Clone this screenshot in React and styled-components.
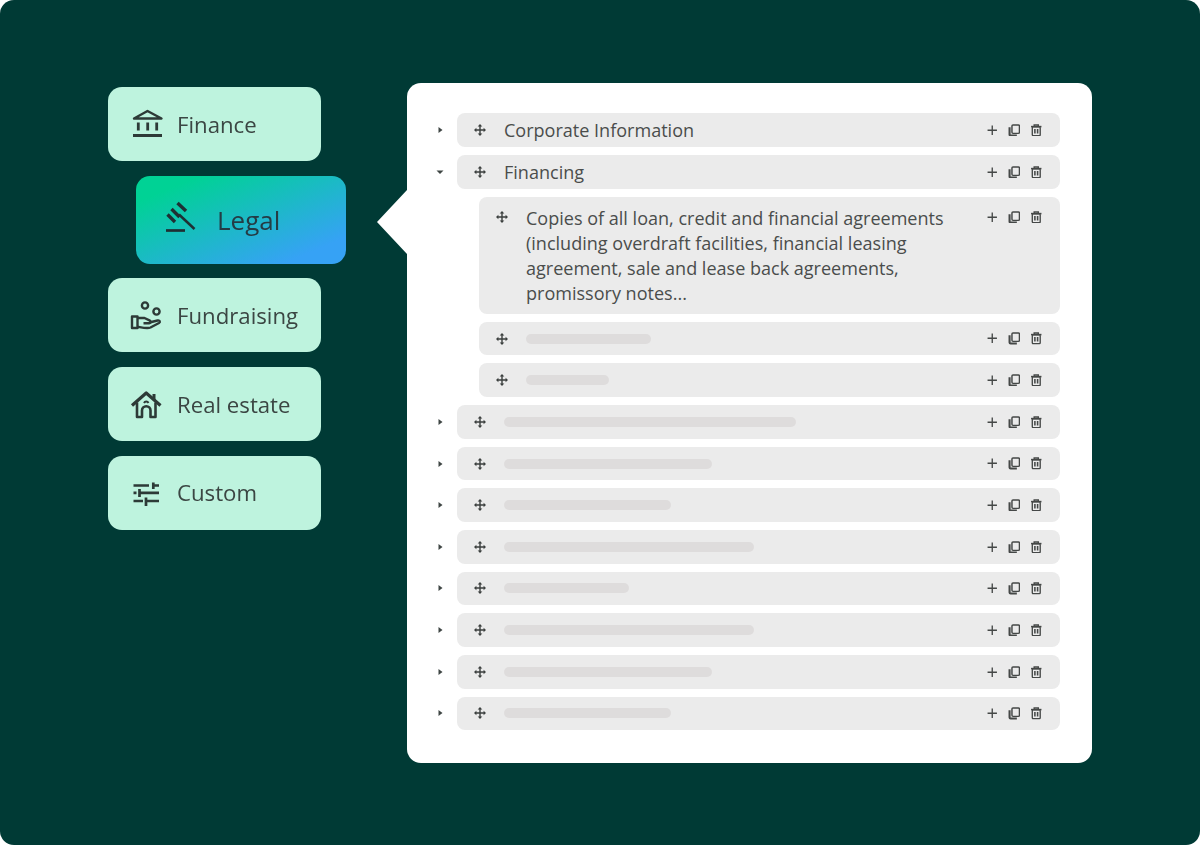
import React from "react";
import styled, { createGlobalStyle } from "styled-components";

const Global = createGlobalStyle`
  html, body { margin: 0; padding: 0; background: #fff; }
  body { font-family: "Open Sans", "Noto Sans", sans-serif; }
`;
const Stage = styled.div`
  width: 1200px; height: 845px; box-sizing: border-box; overflow: hidden;
  background: #003a35; border-radius: 14px;
  display: flex; align-items: flex-start; padding: 83px 0 0 108px;
`;
const Menu = styled.div`
  width: 299px; flex: none; padding-top: 4px;
  display: flex; flex-direction: column; gap: 14.7px;
  filter: blur(0.35px);
`;
const Card = styled.div`
  width: 213px; height: 74px; box-sizing: border-box; border-radius: 14px;
  background: #bef3de; color: #3b4643;
  display: flex; align-items: center; padding-left: 18px; gap: 7px;
  font-size: 22.2px;
  svg { width: 44px; height: 44px; flex: none; color: #2d3a37; }
`;
const ActiveCard = styled.div`
  width: 210px; height: 88px; box-sizing: border-box; margin-left: 28px; border-radius: 14px;
  background: linear-gradient(to bottom right, #00d295 15%, #36a2f5 85%);
  color: #243c45;
  display: flex; align-items: center; padding-left: 22px; gap: 15px;
  font-size: 26px;
  svg { width: 44px; height: 44px; flex: none; color: #1f2f33; }
`;
const Panel = styled.div`
  position: relative; width: 685px; height: 680px; flex: none; box-sizing: border-box;
  background: #fff; border-radius: 14px; padding: 30.4px 32px 0 30px;
  display: flex; flex-direction: column; gap: 8px;
  filter: blur(0.35px);
  &::before {
    content: ""; position: absolute; left: -30px; top: 107px;
    border-style: solid; border-width: 32px 30px 32px 0;
    border-color: transparent #fff transparent transparent;
  }
`;
const Line = styled.div`
  display: flex; align-items: flex-start; flex: none;
`;
const Caret = styled.div`
  width: 20px; height: 33.67px; flex: none; display: flex; align-items: center; justify-content: flex-start;
  svg { width: 8px; height: 8px; color: #3f4644; margin-left: -1px; }
`;
const Row = styled.div`
  flex: 1; min-height: 33.67px; box-sizing: border-box; border-radius: 8px; background: #ebebeb;
  margin-left: ${p => (p.$nested ? "42px" : "0")};
  display: flex; align-items: ${p => (p.$tall ? "flex-start" : "center")};
  padding: ${p => (p.$tall ? "8.5px 18px 7.5px 16px" : "0 18px 0 16px")};
`;
const Handle = styled.div`
  width: 14px; height: ${p => (p.$tall ? "25px" : "14px")}; flex: none; margin-right: 17px;
  display: flex; align-items: center; margin-top: ${p => (p.$tall ? "-1px" : "0")};
  color: #3b3f3e;
  svg { width: 14px; height: 14px; }
`;
const Label = styled.div`
  flex: 1; font-size: 18.05px; color: #4a4d4c; line-height: 25px; min-width: 0; padding-top: 1px;
`;
const LongLabel = styled(Label)`
  max-width: 440px; flex: none; margin-right: auto;
`;
const Skeleton = styled.div`
  height: 10px; border-radius: 5px; background: #dedcdc; width: ${p => p.$w}px; margin-right: auto;
`;
const Actions = styled.div`
  flex: none; display: flex; align-items: center; gap: 9.5px; color: #454847;
  margin-top: ${p => (p.$tall ? "5.5px" : "0")};
  svg { width: 12.5px; height: 12.5px; display: block; }
`;

const Bank = () => (
  <svg viewBox="0 -3 44 44" fill="none" stroke="currentColor">
    <path d="M8 13.500 21.500 6 35.500 13.500z" strokeWidth="2.400" strokeLinejoin="round" />
    <path d="M12.300 17.500V25.500M21.700 17.500V25.500M30.700 17.500V25.500" strokeWidth="2.800" />
    <path d="M7 30.500h29" strokeWidth="3" />
  </svg>
);
const Gavel = () => (
  <svg viewBox="0 2 44 44" fill="none" stroke="currentColor">
    <path d="M19.500 7 28 15" strokeWidth="3.400" />
    <path d="M13.500 13 21.500 21" strokeWidth="3.400" />
    <path d="M9.500 18.500 17 26" strokeWidth="3.400" />
    <path d="M21 18.500 36.500 33" strokeWidth="2.500" />
    <path d="M8 34.500h19" strokeWidth="2.700" />
  </svg>
);
const Hand = () => (
  <svg viewBox="1 -3 44 44" fill="none" stroke="currentColor" strokeWidth="2.400" strokeLinejoin="round">
    <circle cx="20" cy="9.500" r="3.100" />
    <circle cx="31.500" cy="15.500" r="3.100" />
    <path d="M7 20.500h5.500v11.500H7z" />
    <path d="M12.500 22h7l5.500 2.700c1.500 1 .5 3-1.500 2.500h-5" />
    <path d="M24.500 26.500l8-2c2.500-.5 3 1.500 1.500 2.500l-8.500 4.500c-3 1.300-6 .5-13-.8" />
  </svg>
);
const House = () => (
  <svg viewBox="1.500 -4 44 44" fill="none" stroke="currentColor" strokeWidth="2.800" strokeLinejoin="round">
    <path d="M7.500 19.500 21.700 7 36 19.500" strokeWidth="3.200" />
    <path d="M29.500 8v6" strokeWidth="3" />
    <path d="M12.500 16.500V31h5v-6.500a4.200 4.200 0 0 1 8.500 0V31h5V16.500" strokeWidth="2.600" />
    <path d="M19.500 17a2.500 2.500 0 0 1 4.500 0" strokeWidth="2" />
  </svg>
);
const Sliders = () => (
  <svg viewBox="0 -5 44 44" fill="none" stroke="currentColor" strokeWidth="2.700">
    <path d="M7.500 9.500H23M27.300 9.500H33M27.300 6.500v6.500" />
    <path d="M7.500 16.800H10.500M13.500 16.800H33M13.500 13v8" />
    <path d="M7.500 25H17M20 25H33M20 21.500v8.500" />
  </svg>
);
const Move = () => (
  <svg viewBox="0 0 14 14" fill="currentColor" stroke="none">
    <path d="M7 1 9.300 3.400H4.700zM7 13 4.700 10.600h4.600zM1 7l2.400-2.300v4.600zM13 7l-2.400 2.300V4.700z" />
    <path d="M6.300 3h1.400v8H6.300zM3 6.300h8v1.400H3z" />
  </svg>
);
const Right = () => (
  <svg viewBox="0 0 8 8" fill="currentColor"><path d="M2.500 1 6.500 4l-4 3z" /></svg>
);
const Down = () => (
  <svg viewBox="0 0 8 8" fill="currentColor"><path d="M.5 2.500h7L4 6z" /></svg>
);
const Plus = () => (
  <svg viewBox="0 0 12 12" fill="none" stroke="currentColor" strokeWidth="1.300"><path d="M6 1.500v9M1.500 6h9" /></svg>
);
const Copy = () => (
  <svg viewBox="0 0 12 12" fill="none" stroke="currentColor" strokeWidth="1.400">
    <rect x="3.800" y="1" width="7.200" height="8" rx="1" />
    <path d="M1.500 3v7c0 .6.400 1 1 1h6" strokeWidth="2" />
  </svg>
);
const Trash = () => (
  <svg viewBox="0 0 12 12" fill="none" stroke="currentColor" strokeWidth="1.300">
    <path d="M1 2.500h10" strokeWidth="1.500" />
    <path d="M4 2.300V1h4v1.300" />
    <rect x="2.200" y="2.800" width="7.600" height="8.400" rx=".8" />
    <path d="M4.700 4.800v4.400M7.300 4.800v4.400" strokeWidth="1.500" />
  </svg>
);

const Tools = ({ tall }) => (
  <Actions $tall={tall}><Plus /><Copy /><Trash /></Actions>
);

const Item = ({ open, nested, tall, w, children }) => (
  <Line>
    {!nested && <Caret>{open ? <Down /> : <Right />}</Caret>}
    <Row $nested={nested} $tall={tall}>
      <Handle $tall={tall}><Move /></Handle>
      {tall ? <LongLabel>{children}</LongLabel> : children ? <Label>{children}</Label> : <Skeleton $w={w} />}
      <Tools tall={tall} />
    </Row>
  </Line>
);

const skeletonWidths = [292, 208, 167, 250, 125, 250, 208, 167];

export default function App() {
  return (
    <Stage>
      <Global />
      <Menu>
        <Card><Bank />Finance</Card>
        <ActiveCard><Gavel />Legal</ActiveCard>
        <Card><Hand />Fundraising</Card>
        <Card><House />Real estate</Card>
        <Card><Sliders />Custom</Card>
      </Menu>
      <Panel>
        <Item>Corporate Information</Item>
        <Item open>Financing</Item>
        <Item nested tall>
          Copies of all loan, credit and financial agreements (including overdraft facilities, financial leasing agreement, sale and lease back agreements, promissory notes...
        </Item>
        <Item nested w={125} />
        <Item nested w={83} />
        {skeletonWidths.map((w, i) => <Item key={i} w={w} />)}
      </Panel>
    </Stage>
  );
}
